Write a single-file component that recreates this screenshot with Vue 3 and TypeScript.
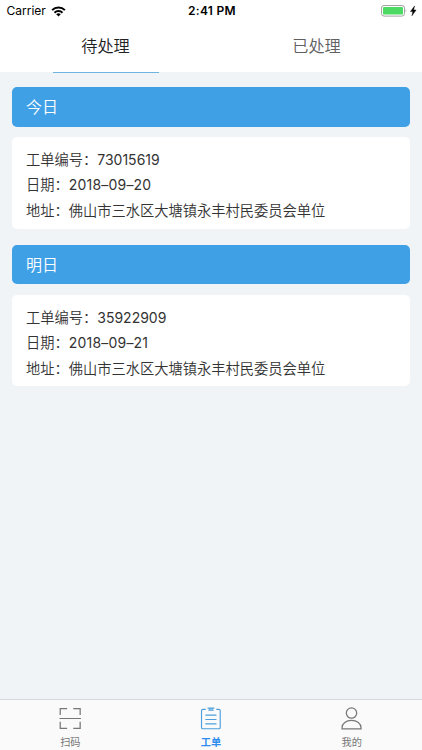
<script setup lang="ts">
interface Order {
  title: string
  id: string
  date: string
  address: string
}

const orders: Order[] = [
  { title: '今日', id: '73015619', date: '2018–09–20', address: '佛山市三水区大塘镇永丰村民委员会单位' },
  { title: '明日', id: '35922909', date: '2018–09–21', address: '佛山市三水区大塘镇永丰村民委员会单位' },
]
</script>

<template>
  <div class="screen">
    <header class="status">
      <div class="carrier">
        <span>Carrier</span>
        <svg width="15" height="11" viewBox="0 0 15 11">
          <g fill="none" stroke="#000" stroke-width="2">
            <path d="M1.1 4.1a9.1 9.1 0 0 1 12.8 0" />
            <path d="M3.5 6.7a5.7 5.7 0 0 1 8 0" />
          </g>
          <path d="M7.5 10.6 5.2 8.3a3.3 3.3 0 0 1 4.6 0z" />
        </svg>
      </div>
      <span class="time">2:41 PM</span>
      <div class="power">
        <svg width="36" height="12" viewBox="0 0 36 12">
          <rect x=".5" y=".5" width="23" height="10.6" rx="2.6" fill="#fff" stroke="#a3a3a3" />
          <rect x="2" y="2" width="20" height="7.6" rx="1.2" fill="#4cd964" />
          <path d="M24.7 4q1.5 1.8 0 3.6z" fill="#a3a3a3" />
          <path d="M33.6.9 29.4 6.6h2.4l-.9 4.2 4.2-5.8h-2.5z" stroke="#000" stroke-width=".4" />
        </svg>
      </div>
    </header>
    <nav class="tabs">
      <div class="tab active"><span>待处理</span></div>
      <div class="tab"><span>已处理</span></div>
    </nav>
    <main class="list">
      <section v-for="order in orders" :key="order.id" class="group">
        <h2>{{ order.title }}</h2>
        <div class="card">
          <p>工单编号：<span class="num">{{ order.id }}</span></p>
          <p>日期：<span class="num date">{{ order.date }}</span></p>
          <p>地址：{{ order.address }}</p>
        </div>
      </section>
    </main>
    <footer class="bar">
      <div class="item">
        <svg width="24" height="24" viewBox="0 0 24 24" fill="none" stroke="#777" stroke-width="1.3">
          <path d="M1.8 8.4V1.7H9M15.4 1.7h7.2v6.7M1.8 15.5v6.7H9M15.4 22.2h7.2v-6.7M1 12h22.4" />
        </svg>
        <span>扫码</span>
      </div>
      <div class="item selected">
        <svg width="24" height="24" viewBox="0 0 24 24" fill="none" stroke="#4c9fdc" stroke-width="1.2">
          <path d="M6.5 2.5H3.5a1.4 1.4 0 0 0-1.4 1.4v17.4a1.4 1.4 0 0 0 1.4 1.4h16.7a1.4 1.4 0 0 0 1.4-1.4V3.9a1.4 1.4 0 0 0-1.4-1.4h-2.7M8.5 1.2h7M9.2 3.4h5.6M10.3 1.2q1.2 1.1 0 2.2M13.7 1.2q-1.2 1.1 0 2.2M6.1 8.4h11.6M6.1 13h11.6M6.1 17.6h11.6" />
        </svg>
        <span>工单</span>
      </div>
      <div class="item">
        <svg width="24" height="24" viewBox="0 0 24 24" fill="none" stroke="#777" stroke-width="1.3">
          <circle cx="11.5" cy="6.3" r="5.4" />
          <path d="M1.6 22.8v-1.2c0-4.6 4.2-7.6 9.9-7.6s9.9 3 9.9 7.6v1.2z" />
        </svg>
        <span>我的</span>
      </div>
    </footer>
  </div>
</template>

<style>
body {
  margin: 0;
}
</style>

<style scoped>
.screen {
  height: 750px;
  display: flex;
  flex-direction: column;
  background: #f0f4f7;
  font-family: Inter, "Noto Sans CJK SC", sans-serif;
  color: #333;
}
.status {
  height: 22px;
  display: grid;
  grid-template-columns: 1fr auto 1fr;
  align-items: center;
  background: #fff;
  color: #000;
  font-size: 12px;
  line-height: 22px;
}
.carrier {
  display: flex;
  align-items: center;
  gap: 5px;
  padding-left: 6.5px;
}
.time {
  font-weight: 600;
  letter-spacing: 0.3px;
  padding-left: 2px;
}
.power {
  display: flex;
  justify-content: flex-end;
  padding-right: 5px;
}
.tabs {
  height: 50px;
  display: flex;
  background: #fff;
}
.tab {
  flex: 1;
  display: flex;
  justify-content: center;
  font-size: 16.2px;
  font-weight: 350;
  line-height: 49px;
  color: #606060;
}
.tab span {
  width: 106px;
  box-sizing: border-box;
  height: 51px;
  text-align: center;
}
.tab.active {
  color: #222;
}
.active span {
  border-bottom: 1.5px solid #6fb3e2;
}
.list {
  flex: 1;
  padding: 15px 12.4px 0;
}
.group {
  margin-bottom: 16px;
}
h2 {
  margin: 0 0 10.5px;
  padding-left: 13.6px;
  height: 39.5px;
  line-height: 41px;
  border-radius: 5px;
  background: #40a0e6;
  color: #fff;
  font-size: 16px;
  font-weight: 350;
}
.card {
  height: 91.7px;
  box-sizing: border-box;
  padding: 9.9px 13.6px 0;
  border-radius: 5px;
  background: #fff;
  font-size: 14.25px;
  font-weight: 350;
}
p {
  margin: 0;
  height: 25.5px;
  line-height: 25.5px;
  white-space: nowrap;
}
.num {
  font-size: 14px;
  font-weight: 370;
}
.date {
  letter-spacing: 0.2px;
}
.bar {
  height: 51px;
  box-sizing: border-box;
  display: flex;
  border-top: 1px solid #d5d8dc;
  background: #fafafa;
}
.item {
  flex: 1;
  display: flex;
  flex-direction: column;
  align-items: center;
  padding-top: 7px;
  font-size: 10.2px;
  line-height: 15px;
  color: #777;
}
.item span {
  margin-top: 5px;
}
.selected {
  color: #2f8ded;
  font-weight: 700;
}
</style>
